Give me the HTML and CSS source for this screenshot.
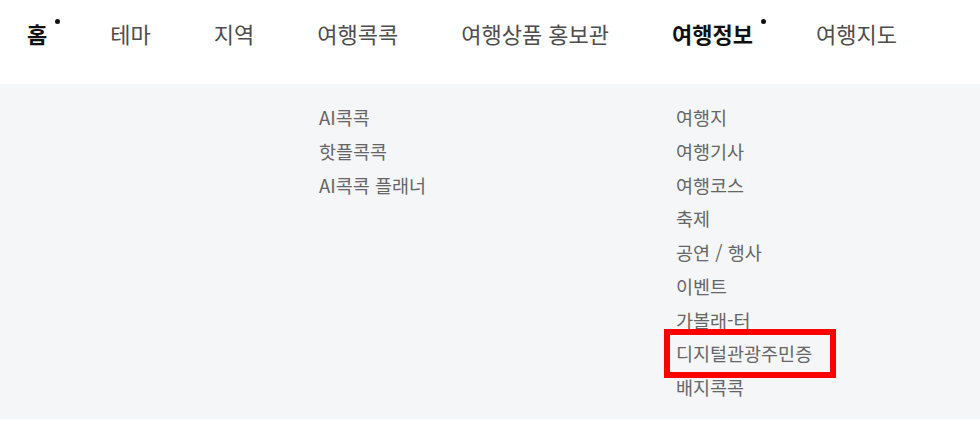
FILE: index.html
```html
<!DOCTYPE html>
<html lang="ko">
<head>
    <meta charset="UTF-8">
    <meta name="viewport" content="width=device-width, initial-scale=1.0">
    <title>여행정보 메뉴</title>
    <link rel="stylesheet" href="styles.css">
</head>
<body>
    <header class="gnb">
        <nav class="gnb-menu">
            <a class="gnb-item active has-dot" href="#">홈</a>
            <a class="gnb-item" href="#">테마</a>
            <a class="gnb-item" href="#">지역</a>
            <a class="gnb-item" href="#">여행콕콕</a>
            <a class="gnb-item" href="#">여행상품 홍보관</a>
            <a class="gnb-item active has-dot" href="#">여행정보</a>
            <a class="gnb-item" href="#">여행지도</a>
        </nav>
    </header>
    <div class="sub-panel">
        <ul class="sub-col sub-col-kokkok">
            <li><a href="#">AI콕콕</a></li>
            <li><a href="#">핫플콕콕</a></li>
            <li><a href="#">AI콕콕 플래너</a></li>
        </ul>
        <ul class="sub-col sub-col-info">
            <li><a href="#">여행지</a></li>
            <li><a href="#">여행기사</a></li>
            <li><a href="#">여행코스</a></li>
            <li><a href="#">축제</a></li>
            <li><a href="#">공연 / 행사</a></li>
            <li><a href="#">이벤트</a></li>
            <li><a href="#">가볼래-터</a></li>
            <li><a class="marked" href="#">디지털관광주민증</a></li>
            <li><a href="#">배지콕콕</a></li>
        </ul>
    </div>
</body>
</html>
```

FILE: styles.css
```css
:root {
    --text-dark: #111;
    --text-nav: #4d4d4d;
    --text-sub: #666;
    --panel-bg: #f5f6f8;
    --mark-color: #ff0000;
}

* {
    box-sizing: border-box;
    margin: 0;
    padding: 0;
}

body {
    background: #fff;
    font-family: "Noto Sans CJK KR", "Noto Sans", sans-serif;
    width: 980px;
    height: 421px;
    overflow: hidden;
}

a {
    color: inherit;
    text-decoration: none;
}

ul {
    list-style: none;
}

/* top navigation */
.gnb {
    height: 84px;
    background: #fff;
}

.gnb-menu {
    display: flex;
    gap: 63px;
    padding: 20px 0 0 27px;
}

.gnb-item {
    position: relative;
    font-size: 22px;
    line-height: 26px;
    color: var(--text-nav);
}

.gnb-item.active {
    font-weight: 700;
    color: var(--text-dark);
}

.gnb-item.has-dot::after {
    content: "";
    position: absolute;
    top: -1px;
    right: -13px;
    width: 5px;
    height: 5px;
    border-radius: 50%;
    background: var(--text-dark);
}

/* dropdown panel */
.sub-panel {
    display: flex;
    height: 335px;
    padding: 17px 0 0 319px;
    background: var(--panel-bg);
}

.sub-col li {
    font-size: 18.5px;
    line-height: 33.75px;
    color: var(--text-sub);
}

.sub-col-kokkok {
    width: 357px;
}

.marked {
    position: relative;
    display: inline-block;
}

.marked::after {
    content: "";
    position: absolute;
    top: -8px;
    bottom: -7px;
    left: -12px;
    right: -24px;
    border: 6px solid var(--mark-color);
}
```
